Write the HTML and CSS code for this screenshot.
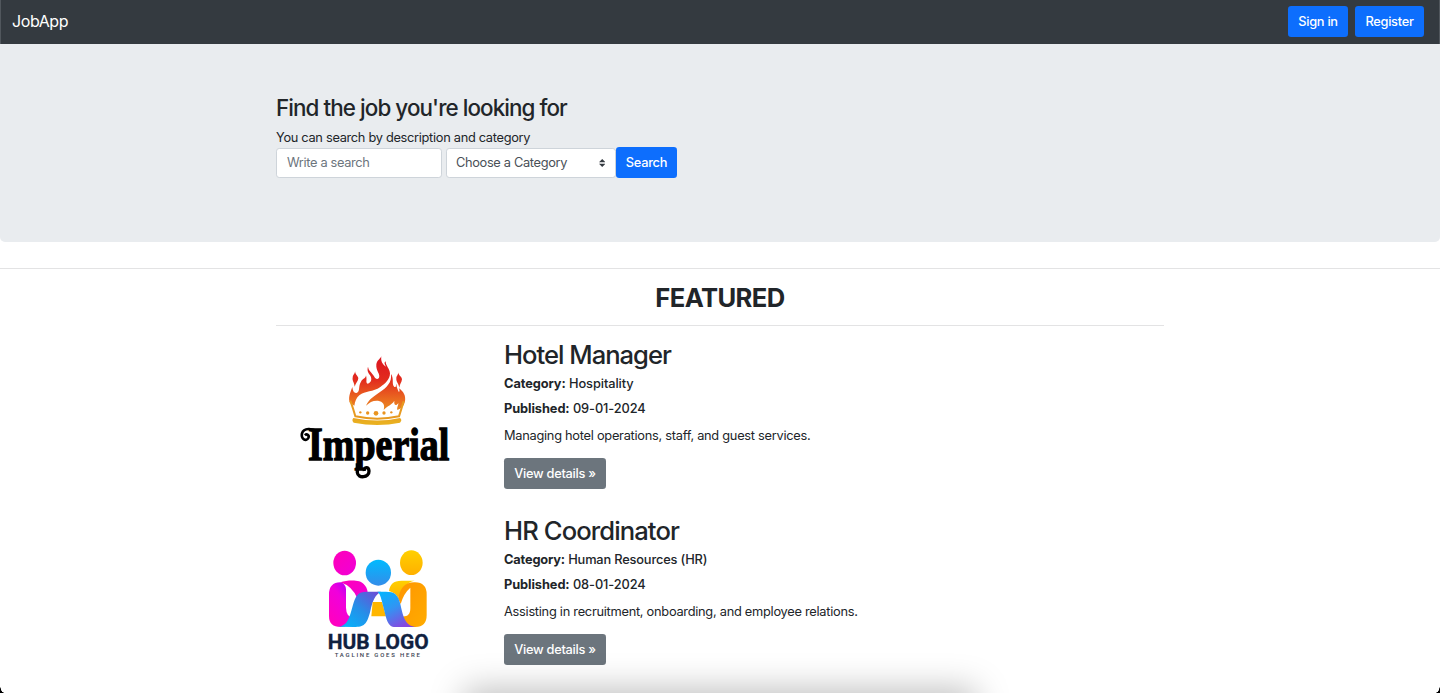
FILE: index.html
```html
<!DOCTYPE html>
<html lang="en">
<head>
<meta charset="utf-8">
<title>JobApp</title>
<link rel="stylesheet" href="styles.css">
</head>
<body>
<nav class="navbar">
  <a class="brand">JobApp</a>
  <div class="nav-actions">
    <a class="btn btn-primary btn-signin">Sign in</a>
    <a class="btn btn-primary btn-register">Register</a>
  </div>
</nav>
<header class="hero">
  <div class="container">
    <h1 class="hero-title">Find the job you're looking for</h1>
    <p class="hero-text">You can search by description and category</p>
    <form class="search">
      <div class="field field-text"><span>Write a search</span></div>
      <div class="field field-select"><span>Choose a Category</span>
        <svg class="caret" viewBox="0 0 4 5"><path fill="#343a40" d="M2 0L0 2h4zm0 5L0 3h4z"/></svg>
      </div>
      <a class="btn btn-primary btn-search">Search</a>
    </form>
  </div>
</header>
<main class="featured">
  <div class="container">
    <h2 class="featured-title">FEATURED</h2>
    <article class="job">
      <div class="job-media">
        <svg class="logo-imperial" viewBox="0 0 570 510">
          <defs>
            <linearGradient id="fire" gradientUnits="userSpaceOnUse" x1="0" y1="23" x2="0" y2="220">
              <stop offset="0" stop-color="#dc1420"/><stop offset=".35" stop-color="#e22b1e"/>
              <stop offset=".65" stop-color="#ea6a20"/><stop offset="1" stop-color="#e9b020"/>
            </linearGradient>
          </defs>
          <g fill="url(#fire)" transform="translate(165 27)">
            <path d="M30 162C24 148 29 134 37 114C38 128 44 134 51 131C61 126 54 113 63 98C68 88 77 90 78 79C82 93 76 101 83 104C93 101 97 91 91 80C86 72 80 67 84 53C86 67 96 70 102 82C107 91 113 92 117 86C122 75 107 67 109 46C111 34 119 32 124 22C122 37 127 46 138 53C132 44 133 40 137 37C137 51 149 58 150 73C150 91 136 104 121 114C99 130 76 124 58 139C49 147 45 156 43 170Z"/>
            <path d="M78 170C86 151 103 141 120 129C141 115 156 100 153 75C163 90 154 105 163 114C170 115 167 109 169 104C169 116 175 124 177 130C180 125 178 120 176 117C190 127 198 139 195 157C192 171 184 180 172 183C169 176 176 169 175 162C168 173 161 168 163 155C154 170 144 168 131 183C136 166 129 158 114 155C98 154 89 160 78 170Z"/>
            <path d="M46 64C43 76 54 80 55 88C54 98 47 102 44 113C43 100 36 95 38 86C39 76 45 76 46 64ZM175 67C173 79 186 82 186 91C185 101 179 105 178 116C175 102 168 98 169 88C169 80 176 78 175 67Z"/>
            <path d="M40 207Q113 222 180 207Q188 213 180 221Q113 235 41 221Q34 214 40 207Z"/>
            <circle cx="61" cy="190" r="3.5"/><circle cx="83" cy="192" r="5"/><circle cx="108" cy="193" r="7"/><circle cx="132" cy="192" r="5"/><circle cx="154" cy="190" r="3.5"/>
          </g>
          <path d="M196 182Q205 207 211 229Q277 243 342 229Q349 208 356 184" fill="none" stroke="#e79a20" stroke-width="6"/>
          <text class="imperial-word" x="69" y="360" textLength="424" lengthAdjust="spacingAndGlyphs">Imperial</text>
          <path d="M98 276C82 264 56 263 51 280C47 297 64 306 70 294C74 285 65 280 60 286" fill="none" stroke="#000" stroke-width="8"/>
          <path d="M217 370V398C219 417 253 413 252 393C251 379 236 380 238 393" fill="none" stroke="#000" stroke-width="10"/>
        </svg>
      </div>
      <div class="job-body">
        <h3 class="job-title title-hotel">Hotel Manager</h3>
        <p class="meta"><b>Category:</b> Hospitality</p>
        <p class="meta"><b>Published:</b> 09-01-2024</p>
        <p class="desc">Managing hotel operations, staff, and guest services.</p>
        <a class="btn btn-secondary">View details »</a>
      </div>
    </article>
    <article class="job">
      <div class="job-media">
        <svg class="logo-hub" viewBox="0 0 420 405">
          <defs>
            <linearGradient id="pink" x1="0" y1="0" x2="1" y2="1"><stop offset="0" stop-color="#ff00b8"/><stop offset="1" stop-color="#f000d8"/></linearGradient>
            <linearGradient id="violet" x1="1" y1="0" x2=".3" y2="1"><stop offset="0" stop-color="#a000ff"/><stop offset=".45" stop-color="#f000dc"/><stop offset="1" stop-color="#ff00c0"/></linearGradient>
            <linearGradient id="blue" x1="1" y1="0" x2="0" y2="1"><stop offset="0" stop-color="#7445d4"/><stop offset=".5" stop-color="#268fe8"/><stop offset="1" stop-color="#00baff"/></linearGradient>
            <linearGradient id="blue2" x1="0" y1="0" x2=".6" y2="1"><stop offset="0" stop-color="#00b7ff"/><stop offset=".5" stop-color="#3195f3"/><stop offset="1" stop-color="#8648df"/></linearGradient>
            <linearGradient id="head" x1="0" y1="0" x2="0" y2="1"><stop offset="0" stop-color="#00baff"/><stop offset="1" stop-color="#348de9"/></linearGradient>
            <linearGradient id="gold" x1="0" y1="0" x2="0" y2="1"><stop offset="0" stop-color="#ffd000"/><stop offset="1" stop-color="#ffb000"/></linearGradient>
            <linearGradient id="orange" x1="0" y1="0" x2="1" y2="1"><stop offset="0" stop-color="#ff9500"/><stop offset="1" stop-color="#ffac00"/></linearGradient>
          </defs>
          <ellipse cx="104" cy="84" rx="34" ry="37" fill="url(#pink)"/>
          <ellipse cx="205" cy="113" rx="38" ry="39" fill="url(#head)"/>
          <ellipse cx="304" cy="83" rx="34" ry="37" fill="url(#gold)"/>
          <path d="M91 142C115 134 151 134 161 147Q171 156 173 172Q151 171 143 192Q127 153 91 142Z" fill="url(#pink)"/>
          <path d="M57 178Q57 143 91 142Q106 145 108 163V218Q109 246 128 246C119 268 110 276 92 276Q57 276 57 243Z" fill="url(#violet)"/>
          <path d="M84 275C113 274 119 246 128 213C137 180 144 169 174 170H213C196 178 188 196 181 228C171 269 162 276 132 276Z" fill="url(#blue)"/>
          <path d="M188 201H216L228 244H184Z" fill="#ffb600"/>
          <path d="M237 168C240 148 249 137 275 137H314C289 142 273 163 264 190Q258 174 237 168Z" fill="url(#gold)"/>
          <path d="M264 190C272 157 286 141 315 142Q350 143 350 178V241Q350 276 316 276H280L268 243C288 247 301 243 301 219V158Q281 175 272 207Z" fill="url(#orange)"/>
          <path d="M202 170H228C253 170 264 178 271 207C280 249 287 276 323 276H256C231 276 229 248 219 212C212 182 210 177 202 170Z" fill="url(#blue2)"/>
          <text class="hub-word" x="53" y="341" textLength="303" lengthAdjust="spacingAndGlyphs">HUB LOGO</text>
          <text class="hub-tag" x="74" y="367" textLength="256">TAGLINE GOES HERE</text>
        </svg>
      </div>
      <div class="job-body">
        <h3 class="job-title title-hr">HR Coordinator</h3>
        <p class="meta meta-long"><b>Category:</b> Human Resources (HR)</p>
        <p class="meta"><b>Published:</b> 08-01-2024</p>
        <p class="desc">Assisting in recruitment, onboarding, and employee relations.</p>
        <a class="btn btn-secondary">View details »</a>
      </div>
    </article>
  </div>
</main>
<div class="dock"><div class="dock-shadow"></div></div>
<i class="corner corner-left"></i><i class="corner corner-right"></i>
</body>
</html>
```
FILE: styles.css
```css
* { box-sizing: border-box; }
body {
  margin: 0;
  height: 693px;
  overflow: hidden;
  position: relative;
  background: #fff;
  color: #212529;
  font: 400 12.8px/19px Inter, "Liberation Sans", sans-serif;
}
h1, h2, h3, p { margin: 0; white-space: nowrap; }
.navbar {
  height: 44px;
  padding: 0 15px 0 11px;
  display: flex;
  align-items: center;
  justify-content: space-between;
  background: #343a40;
  border-left: 1px solid #51575d;
  border-right: 1px solid #51575d;
}
.brand { color: #fff; font-size: 16px; letter-spacing: -.42px; line-height: 24px; padding-bottom: 2px; }
.nav-actions { display: flex; gap: 7px; padding-bottom: 1px; }
.btn {
  display: flex;
  align-items: center;
  justify-content: center;
  height: 31px;
  border-radius: 3.2px;
  color: #fff;
  font-weight: 500;
  letter-spacing: -.27px;
  white-space: nowrap;
}
.btn-primary { background: #0d6efd; }
.btn-signin { width: 60px; }
.btn-register { width: 69px; }
.btn-search { width: 61px; }
.btn-secondary { width: 102px; background: #6c757d; }
.container { width: 888px; margin: 0 auto; }
.hero { height: 198px; padding-top: 50px; background: #e9ecef; border-radius: 0 0 5px 5px; }
.hero-title { font-size: 22.4px; font-weight: 500; letter-spacing: -.92px; line-height: 27px; margin-bottom: 7px; }
.hero-text { line-height: 19px; letter-spacing: -.3px; }
.search { display: flex; align-items: flex-end; }
.field {
  height: 30px;
  display: flex;
  align-items: center;
  padding: 0 9px 1px;
  background: #fff;
  border: 1px solid #ced4da;
  border-radius: 3.2px;
  letter-spacing: -.33px;
  white-space: nowrap;
}
.field-text { width: 166px; margin-right: 4px; padding-left: 10px; color: #6c757d; }
.field-select { width: 170px; justify-content: space-between; padding-right: 10px; color: #495057; }
.caret { width: 6.4px; height: 8px; }
.featured { margin-top: 26px; border-top: 1px solid #e3e3e4; }
.featured-title {
  height: 57px;
  padding-top: 13px;
  margin-bottom: 13px;
  border-bottom: 1px solid #e3e3e4;
  text-align: center;
  font-size: 25.6px;
  font-weight: 700;
  letter-spacing: -.6px;
  line-height: 31px;
}
.job { display: grid; grid-template-columns: 228px 1fr; height: 176px; }
.job-title { font-size: 25.6px; font-weight: 500; line-height: 31px; margin-bottom: 4px; }
.title-hotel { letter-spacing: -1px; }
.title-hr { letter-spacing: -.9px; }
.meta { font-weight: 500; letter-spacing: -.08px; line-height: 19px; margin-bottom: 6px; }
.meta-long { letter-spacing: -.16px; }
.meta b { font-weight: 700; }
.desc { line-height: 19px; letter-spacing: -.265px; margin: 8px 0 13px; }
.logo-imperial { display: block; width: 190px; height: 170px; margin: 1px 0 0 9px; overflow: visible; }
.logo-hub { display: block; width: 140px; height: 135px; margin: 20px 0 0 34px; overflow: visible; }
.imperial-word { font: 700 138px "Liberation Serif", serif; fill: #000; stroke: #000; stroke-width: 4px; }
.hub-word { font: 700 63px Roboto, sans-serif; fill: #10213f; stroke: #10213f; stroke-width: 1px; }
.hub-tag { font: 500 18px Roboto, sans-serif; fill: #3b4352; }
.dock { position: absolute; left: 400px; bottom: 0; width: 640px; height: 40px; overflow: hidden; pointer-events: none; }
.dock-shadow {
  width: 500px;
  height: 30px;
  margin: 42px auto 0;
  box-shadow: 0 0 34px 6px rgba(0, 0, 0, .26);
}
.corner { position: absolute; bottom: 0; width: 4px; height: 8px; }
.corner-left { left: 0; background: radial-gradient(ellipse 4px 8px at 100% 0, transparent 90%, #000); }
.corner-right { right: 0; background: radial-gradient(ellipse 4px 8px at 0 0, transparent 90%, #000); }
```
